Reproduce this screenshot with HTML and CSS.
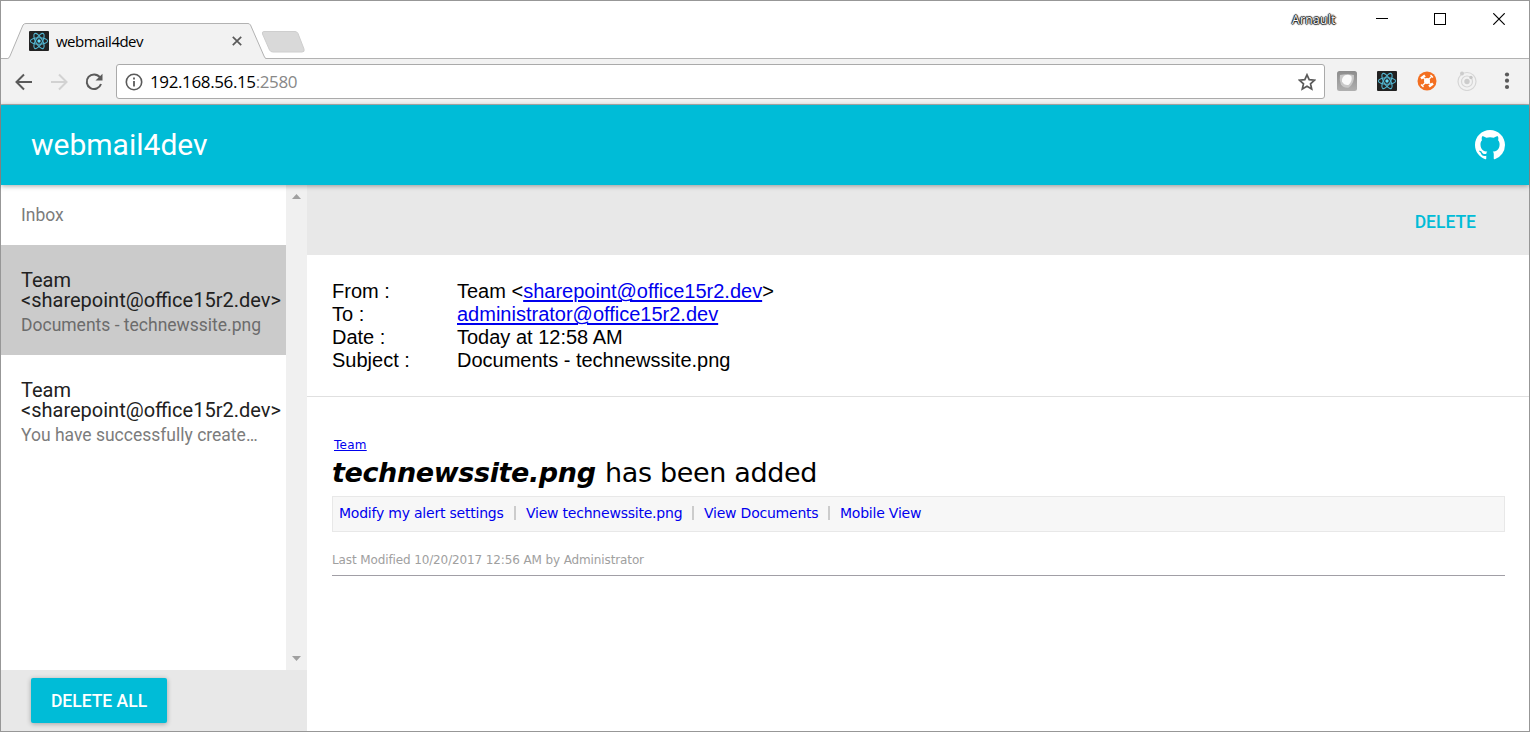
FILE: index.html
```html
<!DOCTYPE html>
<html lang="en">
<head>
<meta charset="utf-8">
<title>webmail4dev</title>
<link rel="stylesheet" href="styles.css">
</head>
<body>
<svg class="defs" width="0" height="0" aria-hidden="true">
  <symbol id="atom" viewBox="0 0 20 20">
    <rect width="20" height="20" rx="1" fill="#222"/>
    <g fill="none" stroke="#53b5d0" stroke-width="1.1">
      <ellipse cx="10" cy="10" rx="8.600" ry="3.300"/>
      <ellipse cx="10" cy="10" rx="8.600" ry="3.300" transform="rotate(60 10 10)"/>
      <ellipse cx="10" cy="10" rx="8.600" ry="3.300" transform="rotate(120 10 10)"/>
    </g>
    <circle cx="10" cy="10" r="1.700" fill="#61dafb"/>
  </symbol>
</svg>
<div class="window">
  <div class="tabstrip">
    <div class="tab">
      <svg class="tab-shape" width="260" height="36" viewBox="0 0 260 36"><path d="M0 35.500H1.500Q3 35.500 4 33L17 2Q18 .5 20 .5H242Q243.500 .5 244.500 2L258 33Q259 35.500 260 35.500V36H0Z" fill="#f2f2f2"/><path d="M0 35.500H1.500Q3 35.500 4 33L17 2Q18 .5 20 .5H242Q243.500 .5 244.500 2L258 33Q259 35.500 260 35.500" fill="none" stroke="#b2b2b2"/></svg>
      <svg class="favicon" width="20" height="20"><use href="#atom"/></svg>
      <span class="tab-title">webmail4dev</span>
      <svg class="tab-close" width="10" height="10" viewBox="0 0 10 10"><path d="M.8.8l8.400 8.400M9.200.8L.8 9.200" stroke="#5a5a5a" stroke-width="1.700"/></svg>
    </div>
    <svg class="new-tab" width="44" height="24" viewBox="0 0 44 24"><path d="M3 1.500H34Q36 1.500 37 3.500L43 19Q44 22 41 22H12Q9.500 22 8.500 20L1.500 4Q.7 1.500 3 1.500Z" fill="#d9d9d9" stroke="#cecece"/></svg>
    <div class="controls">
      <span class="user">Arnault</span>
      <svg class="c-min" width="12" height="12"><path d="M0 5.500H12" stroke="#000"/></svg>
      <svg class="c-max" width="12" height="12"><rect x=".5" y=".5" width="11" height="11" fill="none" stroke="#000"/></svg>
      <svg class="c-close" width="12" height="12"><path d="M.3.3l11.400 11.400M11.700.3L.3 11.700" stroke="#000" stroke-width="1.200"/></svg>
    </div>
  </div>
  <div class="toolbar">
    <svg class="nav-icon" width="18" height="18" viewBox="0 0 18 18"><path d="M17 9H2M9 1.500L1.500 9L9 16.500" fill="none" stroke="#5a5a5a" stroke-width="2"/></svg>
    <svg class="nav-icon" width="18" height="18" viewBox="0 0 18 18"><path d="M1 9H16M9 1.500L16.500 9L9 16.500" fill="none" stroke="#d2d2d2" stroke-width="2"/></svg>
    <svg class="nav-icon" width="18" height="18" viewBox="0 0 18 18"><path d="M14.800 4.200A7.300 7.300 0 1 0 16 11" fill="none" stroke="#5a5a5a" stroke-width="2"/><path d="M17.500.8V7.500H10.500Z" fill="#5a5a5a"/></svg>
    <div class="address">
      <svg class="info" width="18" height="18" viewBox="0 0 18 18"><circle cx="9" cy="9" r="7.700" fill="none" stroke="#5a5a5a" stroke-width="1.600"/><path d="M9 4.500V6.500M9 8V13.500" stroke="#5a5a5a" stroke-width="1.800"/></svg>
      <span class="url">192.168.56.15<span class="port">:2580</span></span>
      <svg class="star" width="18" height="18" viewBox="0 0 18 18"><path d="M9 1.800L11.200 6.700L16.500 7.200L12.500 10.800L13.700 16L9 13.200L4.300 16L5.500 10.800L1.500 7.200L6.800 6.700Z" fill="none" stroke="#5a5a5a" stroke-width="1.700"/></svg>
    </div>
    <div class="extensions">
      <svg width="20" height="20" viewBox="0 0 20 20"><defs><linearGradient id="g" x2="0" y2="1"><stop stop-color="#8c8c8c"/><stop offset="1" stop-color="#b0b0b0"/></linearGradient></defs><rect width="20" height="20" rx="2.500" fill="url(#g)"/><path d="M3 4Q10 2.500 17 4Q17.500 12 12 16.500Q7 17.500 4 13.500Q2 9 3 4Z" fill="#c9c9c9"/><path d="M8 4.300Q13 3 14.500 5.500Q15.500 10.500 11.500 14Q7 14.500 5 10.500Q4.500 6.500 8 4.300Z" fill="#fafafa"/></svg>
      <svg width="20" height="20"><use href="#atom"/></svg>
      <svg width="20" height="20" viewBox="0 0 20 20"><circle cx="10" cy="10" r="9.500" fill="#f36f21"/><path d="M4 7.500L8 4.500M12 15.500L16 12.500" stroke="#fff" stroke-width="2.600"/><path d="M13.500 4L16 6.500M4 13.500L6.500 16M6.500 7L13.500 13M14.500 5.500L5.500 14.500" stroke="#fff" stroke-width="1.300"/><circle cx="10" cy="10" r="3" fill="#fff"/></svg>
      <svg width="20" height="20" viewBox="0 0 20 20"><g fill="none" stroke="#d6d6d6"><circle cx="10" cy="10.500" r="9" stroke-width="1.200"/><circle cx="10" cy="10.500" r="5.500" stroke-width="1.200"/></g><circle cx="10" cy="10.500" r="2.700" fill="#ccc"/><circle cx="5" cy="2.500" r="2" fill="#ccc"/><circle cx="14" cy="6.500" r="1.700" fill="#c6c6c6"/></svg>
      <svg class="kebab" width="6" height="18" viewBox="0 0 6 18"><g fill="#5a5a5a"><circle cx="3" cy="2.500" r="2.100"/><circle cx="3" cy="8.700" r="2.100"/><circle cx="3" cy="15" r="2.100"/></g></svg>
    </div>
  </div>
  <header class="appbar">
    <h1 class="brand">webmail4dev</h1>
    <svg class="github" width="30" height="30" viewBox="0 0 16 16"><path fill="#fff" d="M8 0C3.580 0 0 3.580 0 8c0 3.540 2.290 6.530 5.470 7.590.4.070.55-.17.55-.38 0-.19-.01-.82-.01-1.490-2.010.37-2.530-.49-2.690-.94-.09-.23-.48-.94-.82-1.130-.28-.15-.68-.52-.01-.53.63-.01 1.080.58 1.230.82.72 1.210 1.870.87 2.330.66.070-.52.28-.87.51-1.070-1.780-.2-3.640-.89-3.640-3.950 0-.87.31-1.590.82-2.150-.08-.2-.36-1.020.08-2.120 0 0 .67-.21 2.200.82.64-.18 1.320-.27 2-.27s1.360.09 2 .27c1.530-1.040 2.200-.82 2.200-.82.44 1.100.16 1.920.08 2.120.51.56.82 1.270.82 2.150 0 3.070-1.870 3.750-3.650 3.950.29.25.54.73.54 1.480 0 1.070-.01 1.930-.01 2.200 0 .21.15.46.55.38A8.010 8.010 0 0 0 16 8c0-4.420-3.580-8-8-8z"/></svg>
  </header>
  <main class="content">
    <aside class="sidebar">
      <div class="scroller">
        <div class="list">
          <div class="subheader">Inbox</div>
          <div class="mail selected"><div class="sender">Team</div><div class="sender">&lt;sharepoint@office15r2.dev&gt;</div><div class="topic">Documents - technewssite.png</div></div>
          <div class="mail"><div class="sender">Team</div><div class="sender">&lt;sharepoint@office15r2.dev&gt;</div><div class="topic">You have successfully create…</div></div>
        </div>
        <div class="scrollbar">
          <svg width="9" height="5"><path d="M0 5L4.500 0L9 5Z" fill="#a0a0a0"/></svg>
          <svg width="9" height="5"><path d="M0 0L4.500 5L9 0Z" fill="#a0a0a0"/></svg>
        </div>
      </div>
      <div class="side-foot"><button class="delete-all">DELETE ALL</button></div>
    </aside>
    <section class="reader">
      <div class="actions"><span class="delete">DELETE</span></div>
      <div class="headers">
        <span>From :</span><span>Team &lt;<a>sharepoint@office15r2.dev</a>&gt;</span>
        <span>To :</span><span><a>administrator@office15r2.dev</a></span>
        <span>Date :</span><span>Today at 12:58 AM</span>
        <span>Subject :</span><span>Documents - technewssite.png</span>
      </div>
      <article class="message">
        <a class="team">Team</a>
        <h2 class="headline"><b class="file">technewssite.png</b><span class="added">has been added</span></h2>
        <nav class="links"><a class="l1">Modify my alert settings</a><a class="l2">View technewssite.png</a><a class="l3">View Documents</a><a class="l4">Mobile View</a></nav>
        <p class="modified">Last Modified 10/20/2017 12:56 AM by Administrator</p>
      </article>
    </section>
  </main>
</div>
</body>
</html>
```
FILE: styles.css
```css
* { box-sizing: border-box; }
body { margin: 0; background: #fff; overflow: hidden; font-family: Roboto, sans-serif; }
svg { display: block; flex: none; }
.defs { position: absolute; }
.window { width: 1530px; height: 732px; border: 1px solid #979797; display: flex; flex-direction: column; white-space: nowrap; }
.tabstrip { height: 58px; flex: none; display: flex; align-items: flex-end; border-bottom: 1px solid #b2b2b2; }
.tab { width: 260px; height: 36px; margin: 0 0 -1px 5px; position: relative; display: flex; align-items: center; padding-left: 23px; }
.tab-shape { position: absolute; inset: 0; }
.favicon, .tab-title, .tab-close { position: relative; }
.tab-title { margin-left: 7px; width: 176px; font: 15px/20px "Open Sans", sans-serif; letter-spacing: -.52px; padding-bottom: 1px; }
.new-tab { margin: 0 0 4px -5px; }
.controls { margin-left: auto; align-self: flex-start; display: flex; align-items: center; height: 36px; padding-right: 24px; }
.user { width: 84px; font: 12px "Open Sans", sans-serif; letter-spacing: .4px; color: #fff; text-shadow: 0 0 1px #000, 1px 0 1px #222, -1px 0 1px #222, 0 1px 1px #222, 0 -1px 1px #222; }
.c-max { margin-left: 46px; }
.c-close { margin-left: 47px; }
.toolbar { height: 46px; flex: none; background: #f2f2f2; border-bottom: 1px solid #b2b2b2; display: flex; align-items: center; padding-left: 14px; }
.nav-icon { margin-right: 17px; }
.address { width: 1209px; height: 35px; margin-left: -4px; border: 1px solid #aaa; border-radius: 3px; background: #fff; display: flex; align-items: center; padding: 0 8px; }
.url { margin-left: 7px; font: 17px/24px "Open Sans", sans-serif; letter-spacing: -.38px; }
.port { color: #888; }
.star { margin-left: auto; }
.extensions { display: flex; align-items: center; gap: 20px; margin: -1px 0 0 12px; }
.kebab { margin-left: 7px; }
.appbar { height: 80px; flex: none; position: relative; background: #00bcd7; display: flex; align-items: center; justify-content: space-between; padding: 0 24px 0 30px; box-shadow: 0 1px 5px rgba(0,0,0,.35); }
.brand { margin: 0; font-size: 30px; line-height: 80px; font-weight: 400; color: #fff; }
.content { flex: 1; min-height: 0; display: flex; }
.sidebar { width: 306px; display: flex; flex-direction: column; }
.scroller { flex: 1; display: flex; }
.list { width: 285px; }
.subheader { height: 60px; padding-left: 20px; font-size: 17.500px; line-height: 60px; color: #7c7c7c; }
.mail { height: 110px; padding: 25px 0 0 20px; }
.selected { background: #cbcbcb; }
.sender { font-size: 20px; line-height: 20px; color: #212121; }
.topic { margin-top: 5px; font-size: 17.500px; line-height: 20px; color: #7c7c7c; }
.selected .topic { color: #6c6c6c; }
.scrollbar { width: 21px; background: #f0f0f0; display: flex; flex-direction: column; align-items: center; justify-content: space-between; padding: 9px 0; }
.side-foot { height: 61px; background: #e8e8e8; padding: 8px 30px; }
.delete-all { width: 136px; height: 45px; border: 0; border-radius: 2px; background: #00bcd7; color: #fff; font: 500 17.500px Roboto, sans-serif; padding: 0; box-shadow: 0 1px 5px rgba(0,0,0,.3); }
.reader { flex: 1; }
.actions { height: 70px; background: #e8e8e8; padding: 5px 53px 0 0; text-align: right; }
.delete { font-size: 17.500px; line-height: 65px; font-weight: 500; color: #00bcd7; }
.headers { height: 142px; border-bottom: 1px solid #e0e0e0; padding: 25px 25px 0; display: grid; grid-template-columns: 125px 1fr; grid-auto-rows: 23px; font: 20px/23px "Liberation Sans", Arial, sans-serif; color: #000; }
.headers a { color: #00e; text-decoration: underline; text-decoration-thickness: 2px; text-underline-offset: 2px; }
.message { padding: 38px 24px 0 25px; font-family: "DejaVu Sans", Verdana, sans-serif; }
.team { display: block; margin-left: 2px; font-size: 12px; line-height: 20px; letter-spacing: .25px; color: #00e; text-decoration: underline; }
.headline { margin: 0; height: 41px; display: flex; line-height: 36px; font-size: 27px; font-weight: 400; }
.file { width: 273px; font-style: italic; letter-spacing: -.38px; }
.added { letter-spacing: -.35px; }
.links { height: 36px; border: 1px solid #e8e8e8; background: #f7f7f7; display: flex; padding: 9px 6px; font-size: 14px; line-height: 14px; letter-spacing: -.22px; color: #00e; }
.links a + a { border-left: 2px solid #ccc; padding-left: 10px; height: 14px; }
.l1 { width: 175px; }
.l2 { width: 178px; }
.l3 { width: 136px; }
.modified { margin: 18px 0 0; height: 26px; border-bottom: 1px solid #a19fa6; font-size: 12px; line-height: 20px; letter-spacing: -.12px; color: #a0a0a0; }
```
